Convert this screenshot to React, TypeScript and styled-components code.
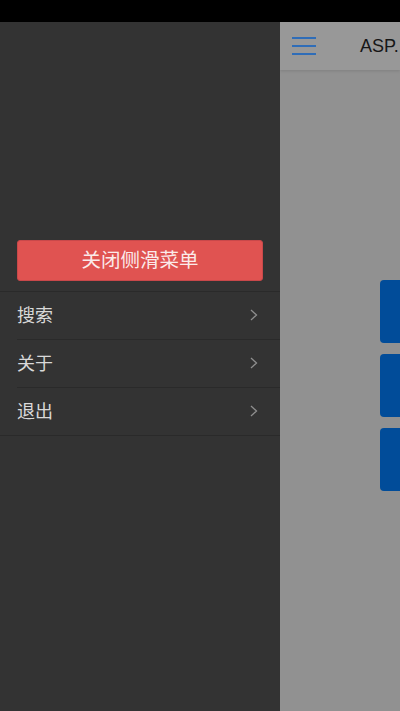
import React from 'react'
import styled, { createGlobalStyle } from 'styled-components'

const GlobalStyle = createGlobalStyle`
  html, body {
    margin: 0;
    padding: 0;
    height: 100%;
    background: #000;
  }
  #root {
    height: 100%;
  }
  * {
    box-sizing: border-box;
  }
`

const menu = ['搜索', '关于', '退出']

export default function App() {
  return (
    <>
      <GlobalStyle />
      <Screen>
        <StatusBar />
        <Stage>
          <Drawer>
            <CloseButton>关闭侧滑菜单</CloseButton>
            <MenuList>
              {menu.map((label, i) => (
                <MenuItem key={label} last={i === menu.length - 1}>
                  <MenuLabel>{label}</MenuLabel>
                  <Chevron viewBox="0 0 8 12">
                    <path d="M1 1l5.5 5L1 11" />
                  </Chevron>
                </MenuItem>
              ))}
            </MenuList>
          </Drawer>
          <Main>
            <Header>
              <Burger viewBox="0 0 24 18">
                <rect x="0" y="0" width="24" height="2" />
                <rect x="0" y="8" width="24" height="2" />
                <rect x="0" y="16" width="24" height="2" />
              </Burger>
              <Title>ASP.</Title>
            </Header>
            <Body>
              <Tile />
              <Tile />
              <Tile />
            </Body>
          </Main>
        </Stage>
      </Screen>
    </>
  )
}

const Screen = styled.div`
  width: 400px;
  height: 711px;
  display: flex;
  flex-direction: column;
  overflow: hidden;
  font-family: 'Liberation Sans', 'Noto Sans CJK SC', sans-serif;
`

const StatusBar = styled.div`
  height: 22px;
  flex-shrink: 0;
  background: #000;
`

const Stage = styled.div`
  flex: 1;
  display: flex;
  min-height: 0;
`

const Drawer = styled.aside`
  width: 280px;
  flex-shrink: 0;
  background: #333333;
  padding-top: 218px;
`

const CloseButton = styled.button`
  display: block;
  width: 246px;
  height: 41px;
  margin: 0 17px 10px;
  border: 1px solid #c9484a;
  border-radius: 3px;
  background: #e05351;
  color: #fbeaea;
  font-family: 'Noto Sans CJK SC', sans-serif;
  font-size: 19.5px;
  line-height: 1;
  padding: 0 0 3px;
`

const MenuList = styled.ul`
  list-style: none;
  margin: 0;
  padding: 0 0 0 17px;
  border-top: 1px solid #2a2a2a;
`

const MenuItem = styled.li<{ last?: boolean }>`
  height: 48px;
  display: flex;
  align-items: center;
  justify-content: space-between;
  padding-right: 22px;
  padding-bottom: 4px;
  border-bottom: 1px solid #2a2a2a;
  margin-left: ${p => (p.last ? '-17px' : '0')};
  padding-left: ${p => (p.last ? '17px' : '0')};
`

const MenuLabel = styled.span`
  color: #d9d9d9;
  font-family: 'Noto Sans CJK SC', sans-serif;
  font-size: 18px;
  line-height: 1;
`

const Chevron = styled.svg`
  width: 8px;
  height: 12px;
  margin-top: 3px;
  fill: none;
  stroke: #8f8f8f;
  stroke-width: 1.3;
`

const Main = styled.main`
  flex: 1;
  min-width: 0;
  display: flex;
  flex-direction: column;
  background: #919191;
  overflow: hidden;
`

const Header = styled.header`
  height: 48px;
  flex-shrink: 0;
  display: flex;
  align-items: center;
  padding-left: 12px;
  background: #989898;
  box-shadow: 0 1px 3px rgba(0, 0, 0, 0.12);
  white-space: nowrap;
`

const Burger = styled.svg`
  width: 24px;
  height: 18px;
  fill: #2f6db8;
  flex-shrink: 0;
`

const Title = styled.span`
  margin-left: 44px;
  font-size: 18px;
  color: #161616;
`

const Body = styled.div`
  display: flex;
  flex-direction: column;
  gap: 11px;
  padding: 210px 0 0 100px;
`

const Tile = styled.div`
  width: 120px;
  height: 63px;
  border-radius: 4px;
  background: #014c99;
`
